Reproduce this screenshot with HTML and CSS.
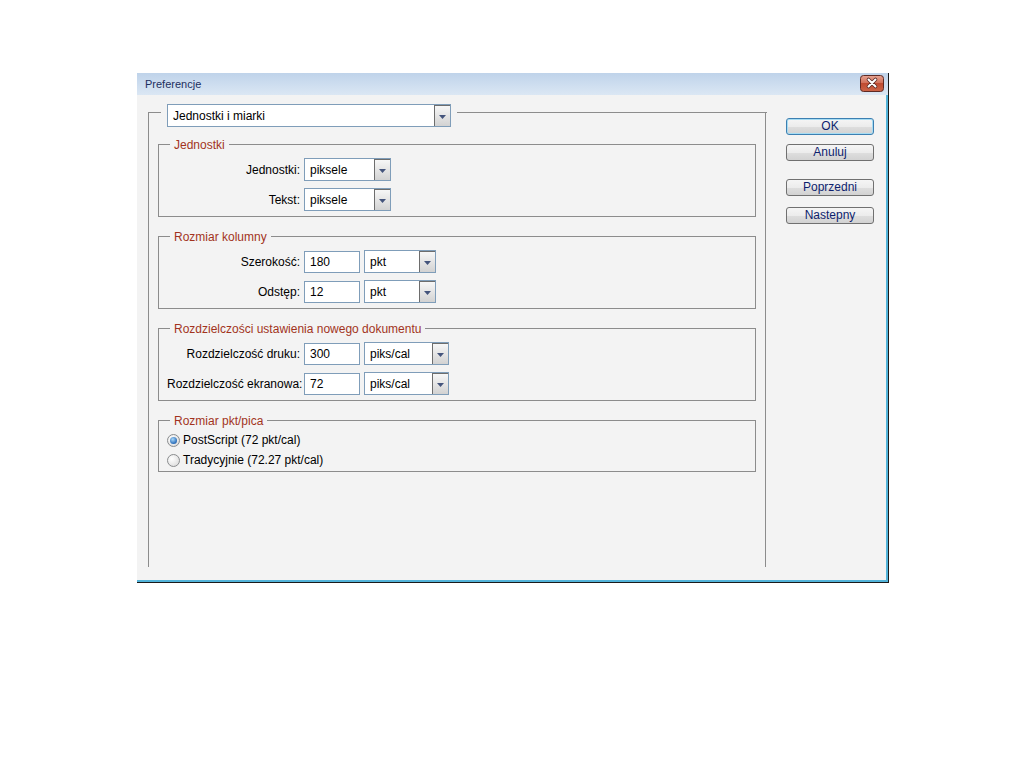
FILE: index.html
```html
<!DOCTYPE html>
<html lang="pl">
<head>
  <meta charset="UTF-8" />
  <title>Preferencje</title>
  <link rel="stylesheet" href="styles.css">
</head>
<body>

<div class="page">
  <div class="window">
    <div class="titlebar">
      <span class="title">Preferencje</span>
      <span class="close">
        <svg width="24" height="17" viewBox="0 0 24 17">
          <defs>
            <linearGradient id="cg" x1="0" y1="0" x2="0" y2="1">
              <stop offset="0" stop-color="#e6a595"/>
              <stop offset=".45" stop-color="#d3725b"/>
              <stop offset=".5" stop-color="#c04b31"/>
              <stop offset="1" stop-color="#cc6447"/>
            </linearGradient>
          </defs>
          <rect x=".5" y=".5" width="23" height="16" rx="3" fill="url(#cg)" stroke="#5e2a24"/>
          <path d="M8.5 4.5l7 7M15.5 4.5l-7 7" stroke="#5a2a25" stroke-width="3.6" stroke-linecap="round"/>
          <path d="M8.5 4.5l7 7M15.5 4.5l-7 7" stroke="#fff" stroke-width="2" stroke-linecap="round"/>
        </svg>
      </span>
    </div>

    <div class="dialog">
      <div class="main">
        <div class="panel-head">
          <div class="line stub"></div>
          <div class="combo combo-main">
            <span class="value">Jednostki i miarki</span>
            <span class="arrow"><svg width="7" height="4" viewBox="0 0 7 4"><polygon points="0,0 7,0 3.5,4" fill="#44547c"/></svg></span>
          </div>
          <div class="line fill"></div>
        </div>

        <div class="group">
          <div class="group-title">Jednostki</div>
          <div class="rows">
            <div class="row">
              <span class="label">Jednostki:</span>
              <div class="combo w87">
                <span class="value">piksele</span>
                <span class="arrow"><svg width="7" height="4" viewBox="0 0 7 4"><polygon points="0,0 7,0 3.5,4" fill="#44547c"/></svg></span>
              </div>
            </div>
            <div class="row">
              <span class="label">Tekst:</span>
              <div class="combo w87">
                <span class="value">piksele</span>
                <span class="arrow"><svg width="7" height="4" viewBox="0 0 7 4"><polygon points="0,0 7,0 3.5,4" fill="#44547c"/></svg></span>
              </div>
            </div>
          </div>
        </div>

        <div class="group">
          <div class="group-title">Rozmiar kolumny</div>
          <div class="rows">
            <div class="row">
              <span class="label">Szerokość:</span>
              <input class="field" type="text" value="180">
              <div class="combo w72">
                <span class="value">pkt</span>
                <span class="arrow"><svg width="7" height="4" viewBox="0 0 7 4"><polygon points="0,0 7,0 3.5,4" fill="#44547c"/></svg></span>
              </div>
            </div>
            <div class="row">
              <span class="label">Odstęp:</span>
              <input class="field" type="text" value="12">
              <div class="combo w72">
                <span class="value">pkt</span>
                <span class="arrow"><svg width="7" height="4" viewBox="0 0 7 4"><polygon points="0,0 7,0 3.5,4" fill="#44547c"/></svg></span>
              </div>
            </div>
          </div>
        </div>

        <div class="group">
          <div class="group-title">Rozdzielczości ustawienia nowego dokumentu</div>
          <div class="rows">
            <div class="row">
              <span class="label">Rozdzielczość druku:</span>
              <input class="field" type="text" value="300">
              <div class="combo w85">
                <span class="value">piks/cal</span>
                <span class="arrow"><svg width="7" height="4" viewBox="0 0 7 4"><polygon points="0,0 7,0 3.5,4" fill="#44547c"/></svg></span>
              </div>
            </div>
            <div class="row">
              <span class="label">Rozdzielczość ekranowa:</span>
              <input class="field" type="text" value="72">
              <div class="combo w85">
                <span class="value">piks/cal</span>
                <span class="arrow"><svg width="7" height="4" viewBox="0 0 7 4"><polygon points="0,0 7,0 3.5,4" fill="#44547c"/></svg></span>
              </div>
            </div>
          </div>
        </div>

        <div class="group">
          <div class="group-title">Rozmiar pkt/pica</div>
          <div class="radios">
            <label class="radio-row"><span class="radio on"></span>PostScript (72 pkt/cal)</label>
            <label class="radio-row"><span class="radio"></span>Tradycyjnie (72.27 pkt/cal)</label>
          </div>
        </div>
      </div>

      <div class="buttons">
        <button class="btn default">OK</button>
        <button class="btn cancel">Anuluj</button>
        <button class="btn prev">Poprzedni</button>
        <button class="btn next">Nastepny</button>
      </div>
    </div>
  </div>
</div>

</body>
</html>
```

FILE: styles.css
```css
body {
  margin: 0;
  background: #fff;
  font-family: "Liberation Sans", Arial, sans-serif;
  font-size: 12px;
  color: #000;
}
.page {
  padding: 73px 0 0 137px;
}
.window {
  width: 752px;
  box-sizing: border-box;
  border-right: 1px solid #1a1a1a;
  border-bottom: 1px solid #1a1a1a;
}
.titlebar {
  height: 22px;
  display: flex;
  justify-content: space-between;
  align-items: center;
  padding: 0 4px 0 8px;
  background: linear-gradient(#bfd3ea, #dbe7f4);
}
.title {
  font-size: 11px;
  color: #1d2f5e;
}
.close {
  display: flex;
  align-self: flex-start;
  margin-top: 2px;
}
.dialog {
  display: flex;
  height: 487px;
  box-sizing: border-box;
  padding-left: 11px;
  background: #f3f3f3;
  border-right: 2px solid #52b3d9;
  border-bottom: 2px solid #52b3d9;
}
.main {
  width: 618px;
  height: 455px;
  margin-top: 17px;
  box-sizing: border-box;
  border-left: 1px solid #8c8c8c;
  border-right: 1px solid #8c8c8c;
}
.panel-head {
  display: flex;
  height: 23px;
  margin: -8px -1px 0 -1px;
}
.line {
  height: 0;
  margin-top: 8px;
  border-top: 1px solid #8c8c8c;
}
.stub {
  width: 13px;
  margin-right: 6px;
}
.fill {
  flex: 1;
  margin-left: 6px;
  margin-right: -1px;
}
.combo {
  display: flex;
  height: 23px;
  box-sizing: border-box;
  border: 1px solid #7f9db9;
  background: #fff;
}
.combo .value {
  flex: 1;
  display: flex;
  align-items: center;
  padding-left: 5px;
  white-space: nowrap;
}
.combo .arrow {
  width: 16px;
  display: flex;
  align-items: center;
  justify-content: center;
  padding-top: 2px;
  box-sizing: border-box;
  border-left: 1px solid #6d6d6d;
  border-top: 1px solid #6d6d6d;
  background: linear-gradient(#f7f7f7, #d2d2d2);
}
.combo-main {
  width: 284px;
}
.w87 { width: 87px; }
.w85 { width: 85px; }
.w72 { width: 72px; }

.group {
  margin: 19px 9px 0;
  border: 1px solid #8c8c8c;
}
.panel-head + .group {
  margin-top: 17px;
}
.group-title {
  width: fit-content;
  margin: -8px 0 0 11px;
  padding: 0 4px;
  line-height: 16px;
  background: #f3f3f3;
  color: #a2331d;
}
.rows {
  display: flex;
  flex-direction: column;
  gap: 7px;
  padding: 5px 8px 5px;
}
.row {
  display: flex;
  align-items: center;
  height: 23px;
}
.label {
  width: 133px;
  margin-right: 4px;
  text-align: right;
  white-space: nowrap;
}
.field {
  width: 56px;
  height: 22px;
  margin: 0 4px 0 0;
  padding: 0 5px;
  box-sizing: border-box;
  border: 1px solid #7f9db9;
  background: #fff;
  font: inherit;
  color: #000;
  outline: none;
}
.radios {
  padding: 1px 8px 1px;
}
.radio-row {
  display: flex;
  align-items: center;
  gap: 3px;
  height: 20px;
}
.radio {
  position: relative;
  width: 13px;
  height: 13px;
  box-sizing: border-box;
  border-radius: 50%;
  border: 1px solid #8a8c8e;
  background: radial-gradient(circle at 35% 35%, #fff, #d6d6d6);
}
.radio.on::after {
  content: "";
  position: absolute;
  left: 2px;
  top: 2px;
  width: 7px;
  height: 7px;
  border-radius: 50%;
  background: radial-gradient(circle at 40% 35%, #a8d8fa, #2a6cb8 70%, #1b4f8e);
}

.buttons {
  display: flex;
  flex-direction: column;
  width: 88px;
  margin-left: 20px;
  padding-top: 23px;
}
.btn {
  height: 17px;
  padding: 0;
  border: 1px solid #707070;
  border-radius: 3px;
  background: linear-gradient(#f5f5f5 0%, #ececec 50%, #dedede 51%, #d2d2d2 100%);
  font: inherit;
  line-height: 15px;
  color: #0e1f6e;
}
.btn.default {
  border-color: #3c7fb1;
  box-shadow: inset 0 0 0 1px #a6dcf3;
}
.btn.cancel { margin-top: 9px; }
.btn.prev { margin-top: 18px; }
.btn.next { margin-top: 11px; }
```
